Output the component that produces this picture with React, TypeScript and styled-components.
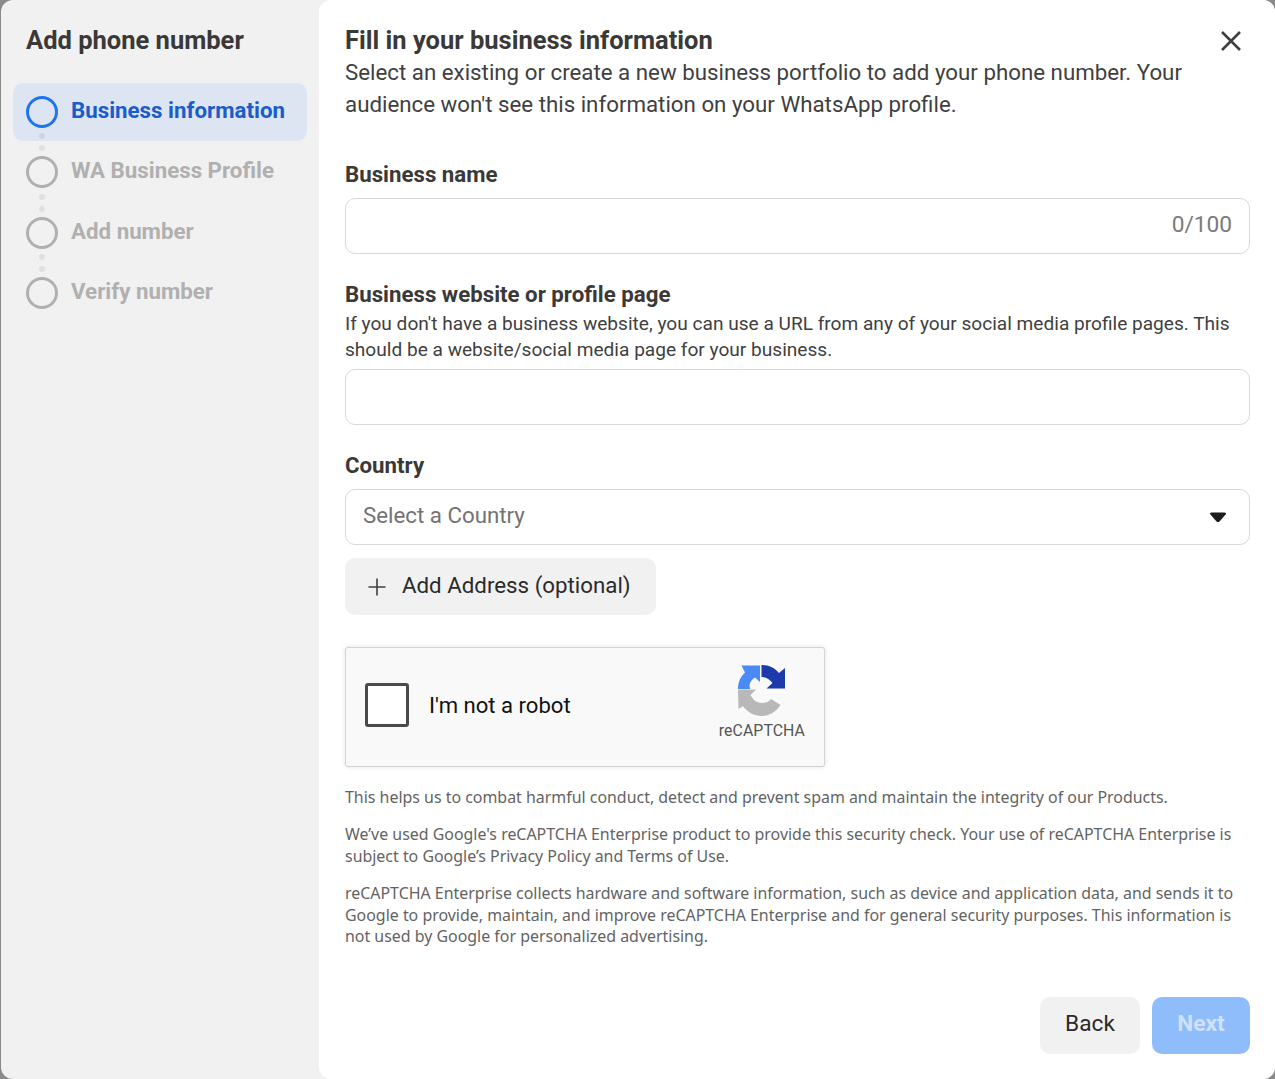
import React from 'react';
import styled, { createGlobalStyle } from 'styled-components';

const GlobalStyle = createGlobalStyle`
  html, body {
    margin: 0;
    padding: 0;
    height: 100%;
    background: #8a8a8a;
    font-family: Roboto, "Liberation Sans", sans-serif;
    overflow: hidden;
  }
  * { box-sizing: border-box; }
`;

const steps = [
  { label: 'Business information', active: true },
  { label: 'WA Business Profile', active: false },
  { label: 'Add number', active: false },
  { label: 'Verify number', active: false },
];

const Logo = () => (
  <svg width="48" height="52" viewBox="0 0 48 52">
    <path d="M0 24 V22 C0.5 16 3 11 7 7.5 L3.5 0.5 H22 V17 L17 12.5 C14 14 12 17 11.5 20 L12 24 Z" fill="#4a8af4" />
    <path d="M23.5 0 C31 0 37 3 41 8 L47 3 V23.5 H28.5 L34.5 18 C32 14.5 28 12 23.5 12 Z" fill="#1c3aa9" />
    <path d="M0 24.5 H18 L12.5 30 C15 35 19 38 24 38 C28 38 31 36.5 33 34 L42.5 40 C38 47 31 51 24 51 C16 51 9 47 5 41 L0.5 44 Z" fill="#b8b8b8" />
  </svg>
);

export default function App() {
  return (
    <>
      <GlobalStyle />
      <Modal>
        <Sidebar>
          <SideTitle>Add phone number</SideTitle>
          <StepList>
            {steps.map((step, i) => (
              <React.Fragment key={step.label}>
                <Step $active={step.active}>
                  <Ring $active={step.active} />
                  <StepLabel $active={step.active}>{step.label}</StepLabel>
                </Step>
                {i < steps.length - 1 && (
                  <Dots>
                    <Dot />
                    <Dot />
                  </Dots>
                )}
              </React.Fragment>
            ))}
          </StepList>
        </Sidebar>
        <Main>
          <Header>
            <HeaderText>
              <Title>Fill in your business information</Title>
              <Intro>
                Select an existing or create a new business portfolio to add your phone number. Your
                audience won't see this information on your WhatsApp profile.
              </Intro>
            </HeaderText>
            <CloseButton aria-label="Close">
              <svg width="22" height="22" viewBox="0 0 22 22">
                <path d="M2 2 L20 20 M20 2 L2 20" stroke="#3f3f3f" strokeWidth="2.6" fill="none" />
              </svg>
            </CloseButton>
          </Header>

          <NameField>
            <Label>Business name</Label>
            <InputBox>
              <Counter>0/100</Counter>
            </InputBox>
          </NameField>

          <WebsiteField>
            <Label>Business website or profile page</Label>
            <Hint>
              If you don't have a business website, you can use a URL from any of your social media
              profile pages. This should be a website/social media page for your business.
            </Hint>
            <InputBox />
          </WebsiteField>

          <CountryField>
            <Label>Country</Label>
            <InputBox>
              <Placeholder>Select a Country</Placeholder>
              <Caret viewBox="0 0 18 11">
                <path d="M1 2 Q0.5 0.5 2.5 0.5 L15.5 0.5 Q17.5 0.5 17 2 L10.5 9.5 Q9 10.7 7.5 9.5 Z" fill="#1c1c1c" />
              </Caret>
            </InputBox>
          </CountryField>

          <AddButton>
            <svg width="18" height="18" viewBox="0 0 18 18">
              <path d="M9 0.5 V17.5 M0.5 9 H17.5" stroke="#3f3f3f" strokeWidth="1.6" fill="none" />
            </svg>
            <AddLabel>Add Address (optional)</AddLabel>
          </AddButton>

          <Captcha>
            <CheckBox />
            <CaptchaText>I'm not a robot</CaptchaText>
            <CaptchaBrand>
              <Logo />
              <BrandName>reCAPTCHA</BrandName>
            </CaptchaBrand>
          </Captcha>

          <Legal>
            <p>This helps us to combat harmful conduct, detect and prevent spam and maintain the integrity of our Products.</p>
            <p>We’ve used Google's reCAPTCHA Enterprise product to provide this security check. Your use of reCAPTCHA Enterprise is subject to Google’s Privacy Policy and Terms of Use.</p>
            <p>reCAPTCHA Enterprise collects hardware and software information, such as device and application data, and sends it to Google to provide, maintain, and improve reCAPTCHA Enterprise and for general security purposes. This information is not used by Google for personalized advertising.</p>
          </Legal>

          <Footer>
            <BackButton>Back</BackButton>
            <NextButton disabled>Next</NextButton>
          </Footer>
        </Main>
      </Modal>
    </>
  );
}

const Modal = styled.div`
  display: flex;
  width: 1274px;
  height: 1079px;
  margin-left: 1px;
  background: #f1f1f1;
  border-radius: 12px;
  overflow: hidden;
`;

const Sidebar = styled.aside`
  width: 318px;
  flex-shrink: 0;
  padding: 24px 12px 0 12px;
`;

const SideTitle = styled.h2`
  margin: 0 0 0 13px;
  font-size: 25.5px;
  line-height: 32px;
  font-weight: 700;
  color: #3b3838;
`;

const StepList = styled.div`
  display: flex;
  flex-direction: column;
  margin-top: 27px;
`;

const Step = styled.div<{ $active: boolean }>`
  display: flex;
  align-items: center;
  gap: 13px;
  height: ${(p) => (p.$active ? '58px' : '32px')};
  margin-bottom: ${(p) => (p.$active ? '-13px' : '0')};
  padding-left: 13px;
  border-radius: 10px;
  background: ${(p) => (p.$active ? '#dce5f1' : 'transparent')};
`;

const Ring = styled.span<{ $active: boolean }>`
  width: 32px;
  height: 32px;
  flex-shrink: 0;
  border-radius: 50%;
  border: 3.5px solid ${(p) => (p.$active ? '#1e74ee' : '#b0b0b0')};
`;

const StepLabel = styled.span<{ $active: boolean }>`
  margin-bottom: 4px;
  font-size: 22.3px;
  font-weight: 700;
  color: ${(p) => (p.$active ? '#1b5ccc' : '#b0b0b0')};
`;

const Dots = styled.div`
  display: flex;
  flex-direction: column;
  align-items: center;
  justify-content: center;
  gap: 6px;
  width: 32px;
  height: 28.4px;
  margin-left: 13px;
`;

const Dot = styled.span`
  width: 6px;
  height: 6px;
  border-radius: 50%;
  background: rgba(0, 0, 0, 0.07);
`;

const Main = styled.main`
  flex: 1;
  background: #fff;
  border-radius: 12px 0 0 12px;
  padding: 24px 25px 25px 26px;
  display: flex;
  flex-direction: column;
`;

const Header = styled.header`
  display: flex;
  justify-content: space-between;
  align-items: flex-start;
`;

const HeaderText = styled.div`
  width: 850px;
`;

const Title = styled.h1`
  margin: 0;
  font-size: 25.5px;
  line-height: 32px;
  font-weight: 700;
  color: #3b3838;
`;

const Intro = styled.p`
  margin: 0;
  font-size: 22.3px;
  line-height: 32px;
  color: #3f3f3f;
`;

const CloseButton = styled.button`
  border: none;
  background: none;
  padding: 0;
  margin: 6px 8px 0 0;
  display: flex;
`;

const NameField = styled.section`
  margin-top: 38px;
`;

const WebsiteField = styled.section`
  margin-top: 24px;
`;

const CountryField = styled.section`
  margin-top: 24px;
`;

const Label = styled.div`
  font-size: 22.25px;
  line-height: 32px;
  font-weight: 700;
  color: #3b3838;
`;

const Hint = styled.div`
  margin-top: 1px;
  margin-bottom: 6px;
  font-size: 19.1px;
  line-height: 26px;
  color: #3f3f3f;
`;

const InputBox = styled.div`
  height: 56px;
  margin-top: 8px;
  padding: 0 17px 3px;
  border: 1px solid #d8d8d8;
  border-radius: 10px;
  display: flex;
  align-items: center;
  justify-content: space-between;
  ${Hint} + & {
    margin-top: 0;
  }
`;

const Counter = styled.span`
  margin-left: auto;
  font-size: 22.7px;
  color: #7b7b7b;
`;

const Placeholder = styled.span`
  margin-bottom: 1px;
  font-size: 22.3px;
  color: #737373;
`;

const Caret = styled.svg`
  width: 18px;
  height: 11px;
  margin: 3px 5px 0 0;
`;

const AddButton = styled.button`
  align-self: flex-start;
  display: flex;
  align-items: center;
  gap: 16px;
  width: 311px;
  height: 57px;
  margin-top: 13px;
  padding: 0 0 0 23px;
  border: none;
  border-radius: 10px;
  background: #f1f1f1;
  font-family: inherit;
  font-size: 22.3px;
  color: #2a2a2a;
`;

const AddLabel = styled.span`
  margin-bottom: 3px;
`;

const Captcha = styled.div`
  display: flex;
  align-items: center;
  width: 480px;
  height: 120px;
  margin-top: 32px;
  padding: 0 19px 4px;
  background: #f9f9f9;
  border: 1px solid #d3d3d3;
  border-radius: 3px;
  box-shadow: 0 0 4px 1px rgba(0, 0, 0, 0.08);
`;

const CheckBox = styled.div`
  width: 44px;
  height: 44px;
  background: #fff;
  border: 3px solid #4a4a4a;
  border-radius: 3px;
  flex-shrink: 0;
`;

const CaptchaText = styled.span`
  margin-left: 20px;
  font-size: 22.1px;
  color: #111;
`;

const CaptchaBrand = styled.div`
  margin-left: auto;
  display: flex;
  flex-direction: column;
  align-items: center;
  gap: 4px;
  margin-top: -6px;
`;

const BrandName = styled.span`
  font-size: 15.8px;
  color: #555;
  letter-spacing: 0.1px;
`;

const Legal = styled.div`
  margin-top: 20px;
  font-family: "Noto Sans", "Open Sans", sans-serif;
  font-size: 15.93px;
  line-height: 21.3px;
  color: #636363;
  p {
    margin: 0 0 16.2px;
  }
`;

const Footer = styled.footer`
  display: flex;
  justify-content: flex-end;
  gap: 12px;
  margin-top: auto;
`;

const BackButton = styled.button`
  width: 100px;
  height: 57px;
  padding: 0 0 5px;
  border: none;
  border-radius: 10px;
  background: #f1f1f1;
  font-family: inherit;
  font-size: 22.7px;
  color: #2a2a2a;
`;

const NextButton = styled.button`
  width: 98px;
  height: 57px;
  padding: 0 0 5px;
  border: none;
  border-radius: 10px;
  background: #8fbcfa;
  font-family: inherit;
  font-size: 22.7px;
  font-weight: 700;
  color: #cfe1fc;
`;
